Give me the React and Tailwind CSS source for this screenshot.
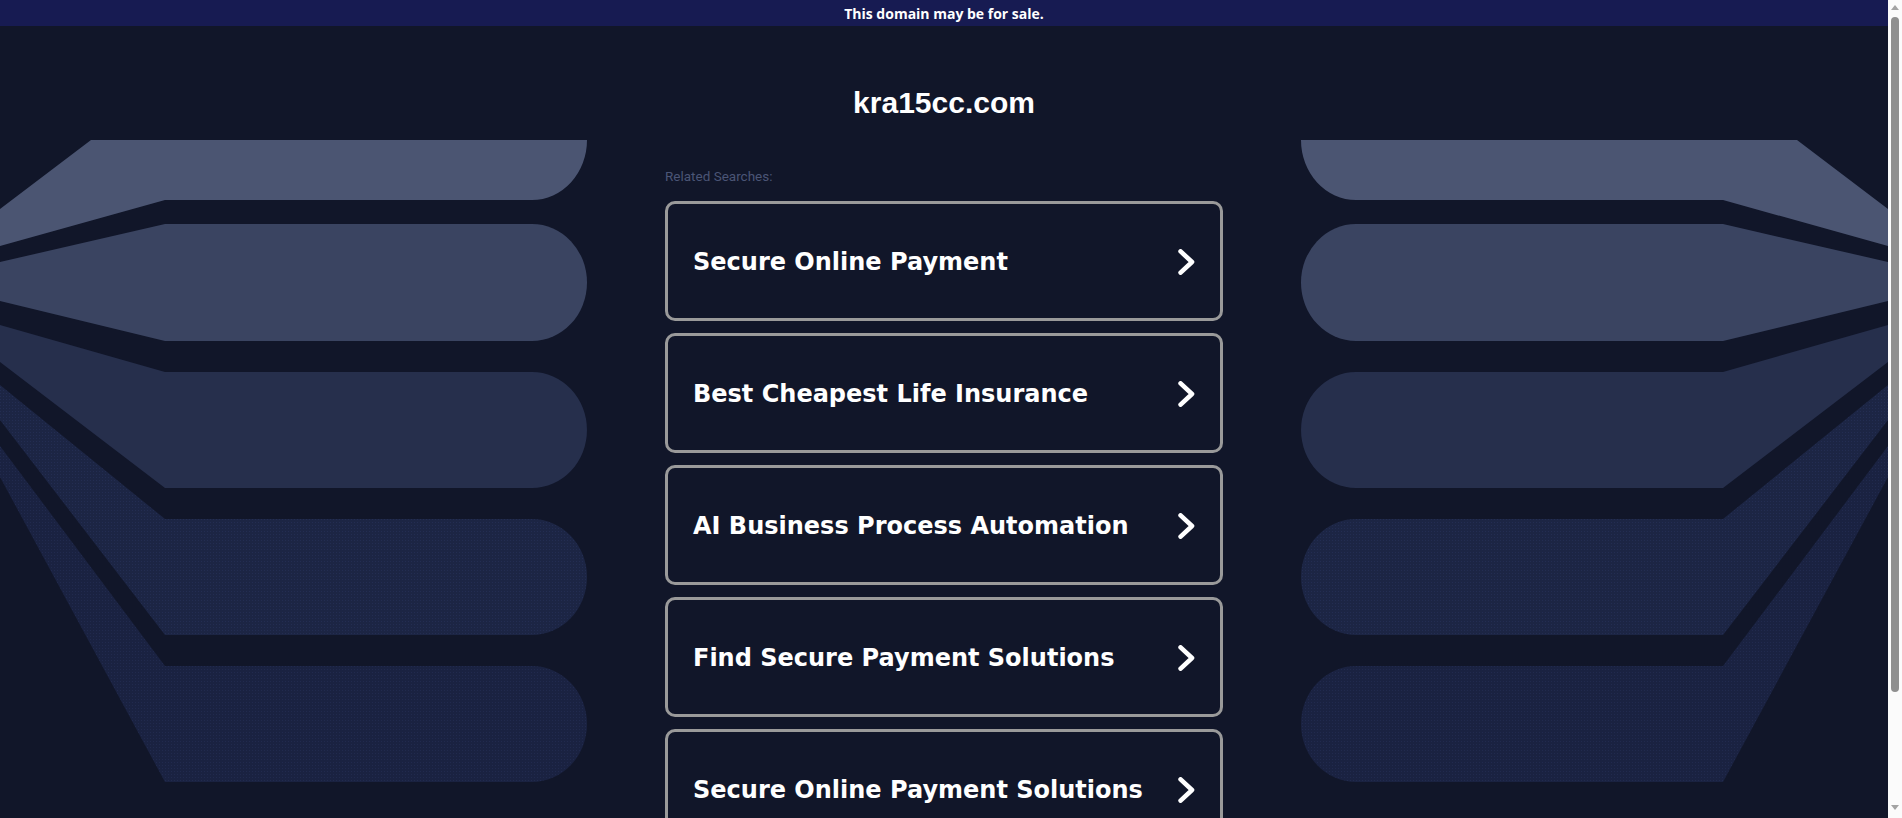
import React from 'react';

const searches = [
  'Secure Online Payment',
  'Best Cheapest Life Insurance',
  'AI Business Process Automation',
  'Find Secure Payment Solutions',
  'Secure Online Payment Solutions',
];

// page y coords, left wing; the right wing is the same drawing flipped
const SHAPES = [
  { d: 'M91 140 H587 A55 60 0 0 1 532 200 H165 L0 246 V209 Z', fill: '#4b5572' },
  { d: 'M165 224 H532 A55 58.5 0 0 1 532 341 H165 L0 301 V262 Z', fill: '#3a4461' },
  { d: 'M165 372 H532 A55 58 0 0 1 532 488 H165 L0 362 V325 Z', fill: '#262f4c' },
  { d: 'M165 519 H532 A55 58 0 0 1 532 635 H165 L0 420 V385 Z', pattern: 'dotsA' },
  { d: 'M165 666 H532 A55 58 0 0 1 532 782 H165 L0 477 V446 Z', pattern: 'dotsB' },
];

function Wing({ flip, id }) {
  return (
    <svg
      width="587"
      height="645"
      viewBox="0 140 587 645"
      className={flip ? 'block shrink-0 -scale-x-100' : 'block shrink-0'}
    >
      <defs>
        <pattern id={`dotsA${id}`} width="3" height="3" patternUnits="userSpaceOnUse">
          <rect width="3" height="3" fill="#1c2544" />
          <rect width="1" height="1" fill="#232d52" />
        </pattern>
        <pattern id={`dotsB${id}`} width="3" height="3" patternUnits="userSpaceOnUse">
          <rect width="3" height="3" fill="#1a2241" />
          <rect width="1" height="1" fill="#212a4e" />
        </pattern>
      </defs>
      {SHAPES.map((s, i) => (
        <path key={i} d={s.d} fill={s.pattern ? `url(#${s.pattern}${id})` : s.fill} />
      ))}
    </svg>
  );
}

function Chevron() {
  return (
    <svg width="17" height="26" viewBox="0 0 17 26" className="shrink-0">
      <path d="M2.6 2.4 L14 13 L2.6 23.6" fill="none" stroke="#fff" strokeWidth="4.6" strokeLinecap="round" strokeLinejoin="round" />
    </svg>
  );
}

// the browser's scrollbar as it shows in the shot
function Scrollbar() {
  return (
    <div className="flex h-screen w-[14px] shrink-0 flex-col items-center bg-[#fbfbfb]">
      <svg width="8" height="5" viewBox="0 0 8 5" className="mt-[5px]">
        <path d="M0 5 L4 0 L8 5 Z" fill="#a3a3a3" />
      </svg>
      <div className="mt-[7px] h-[675px] w-[8px] rounded-full bg-[#8f8f8f]" />
      <div className="flex-1" />
      <svg width="8" height="5" viewBox="0 0 8 5" className="mb-[8px]">
        <path d="M0 0 L8 0 L4 5 Z" fill="#a3a3a3" />
      </svg>
    </div>
  );
}

export default function App() {
  return (
    <div className="flex h-screen overflow-hidden">
      <div className="min-w-0 flex-1 overflow-hidden bg-[#111629]">
        <div className="flex h-[26px] items-center justify-center bg-[#171b52] font-['Open_Sans',sans-serif] text-[14px] font-bold text-white">
          This domain may be for sale.
        </div>

        <div className="flex pb-10">
          <aside className="flex min-w-0 flex-1 overflow-hidden pt-[114px]">
            <Wing id="L" />
          </aside>

          <main className="w-[558px] shrink-0">
            <h1 className="mt-[59px] text-center font-['Liberation_Sans',Arial,sans-serif] text-[30px] leading-[36px] font-bold text-white">
              kra15cc.com
            </h1>
            <p className="mt-[47px] font-['Roboto',sans-serif] text-[13.5px] leading-[16px] text-[#4b5576]">
              Related Searches:
            </p>
            <div className="mt-[17px] flex flex-col gap-[12px]">
              {searches.map((s) => (
                <a
                  key={s}
                  href="#"
                  className="flex h-[120px] items-center justify-between rounded-[10px] border-[3px] border-[#9a9a9a] pr-[25px] pl-[25px] pt-[2px] font-['DejaVu_Sans',Verdana,sans-serif] text-[24px] font-bold text-white"
                >
                  <span>{s}</span>
                  <Chevron />
                </a>
              ))}
            </div>
          </main>

          <aside className="flex min-w-0 flex-1 justify-end overflow-hidden pt-[114px]">
            <Wing id="R" flip />
          </aside>
        </div>
      </div>
      <Scrollbar />
    </div>
  );
}
